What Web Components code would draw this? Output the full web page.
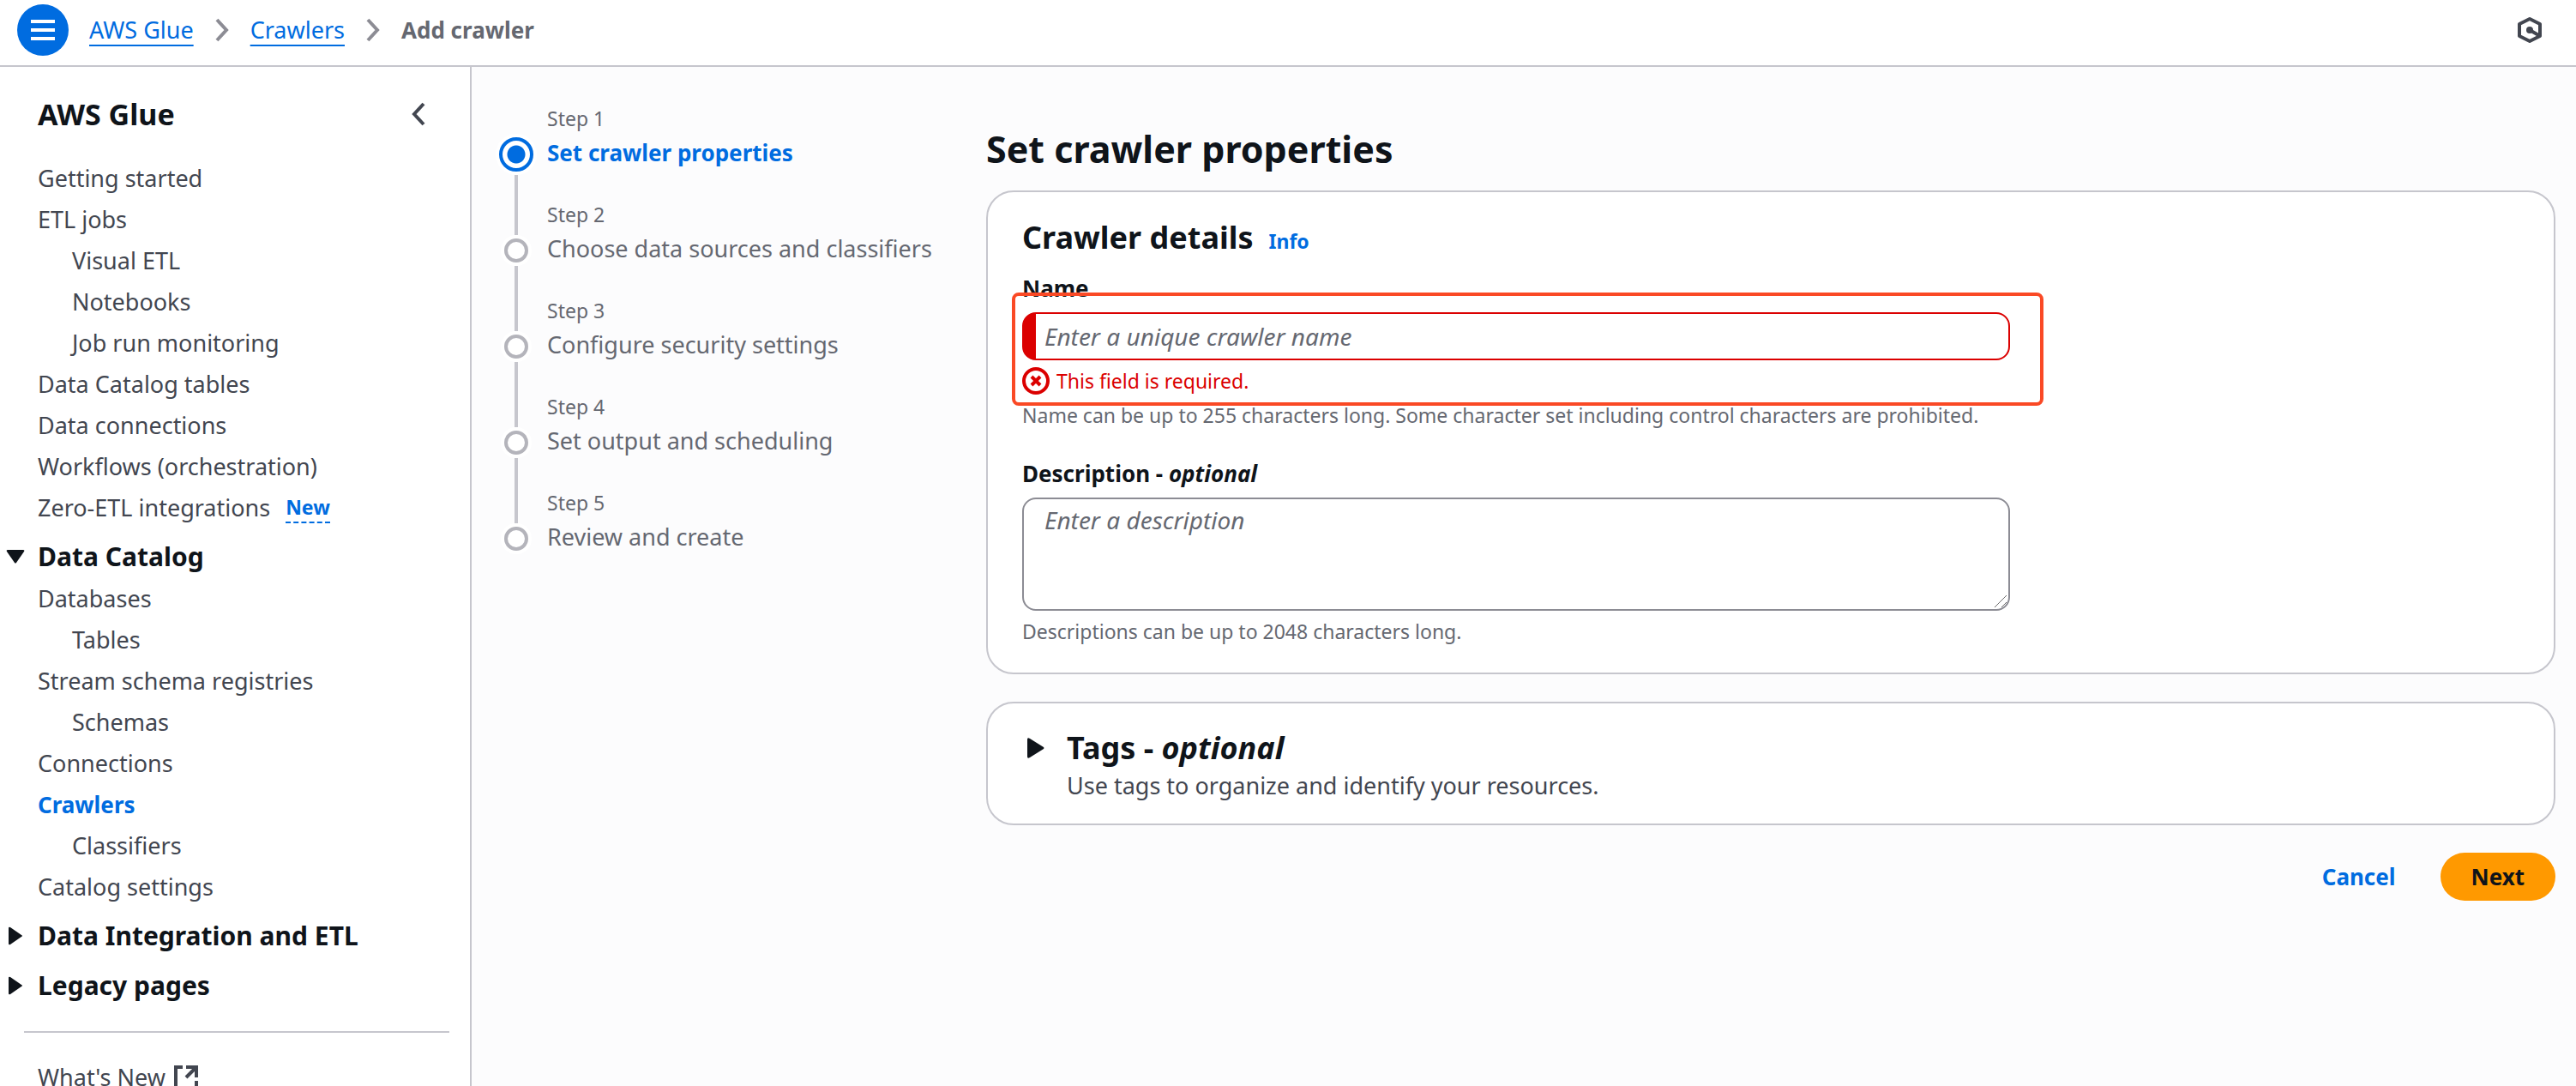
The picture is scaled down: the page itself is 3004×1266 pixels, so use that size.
<!DOCTYPE html>
<html lang="en">
<head>
<meta charset="utf-8">
<meta name="viewport" content="width=device-width, initial-scale=1">
<title>Add crawler - AWS Glue</title>
<style>
    :root {
        --heading: #0f141a;
        --body: #424650;
        --muted: #656871;
        --line: #c6c6cd;
        --field-line: #8c8c94;
        --blue: #006ce0;
        --red: #db0000;
        --orange: #ff9900;
        --text-s: 23px;
        --text-m: 27px;
        --text-m-bold: 26px;
        --text-xl: 36px;
    }

    body {
        margin: 0;
        height: 100vh;
        overflow: hidden;
        font-family: "Noto Sans", "Open Sans", sans-serif;
        font-size: var(--text-m);
        line-height: 40px;
        color: var(--heading);
        background: #fcfcfd;
    }
</style>
</head>
<body>
<app-shell>
    <top-bar slot="header"></top-bar>
    <side-nav slot="nav" heading="AWS Glue"></side-nav>
    <step-list slot="steps" current="1"></step-list>

    <page-content heading="Set crawler properties">
        <panel-box>
            <panel-title>Crawler details</panel-title>
            <form-field placeholder="Enter a unique crawler name" error="This field is required."
                hint="Name can be up to 255 characters long. Some character set including control characters are prohibited.">Name</form-field>
            <form-field multiline placeholder="Enter a description"
                hint="Descriptions can be up to 2048 characters long.">Description - <i>optional</i></form-field>
        </panel-box>
        <panel-box>
            <expand-section>
                Tags - <i>optional</i>
                <span slot="description">Use tags to organize and identify your resources.</span>
            </expand-section>
        </panel-box>
        <wizard-actions></wizard-actions>
    </page-content>
</app-shell>

<script>
const ARROW_RIGHT = '<path d="M8 7v18q0 2 2 1l13-9q2-1 0-2L10 6q-2-1-2 1z"/>';
const ARROW_DOWN = '<path d="M7 8h18q2 0 1 2l-9 13q-1 1-2 0L6 10q-1-2 1-2z"/>';

class AppShell extends HTMLElement {
    connectedCallback() {
        this.attachShadow({ mode: 'open' });
        this.shadowRoot.innerHTML = `
            <style>
                :host {
                    display: flex;
                    flex-direction: column;
                    height: 100%;
                }

                .columns {
                    display: grid;
                    grid-template-columns: 550px 1fr;
                    flex: 1;
                    min-height: 0;
                }

                main {
                    display: grid;
                    grid-template-columns: 568px 1fr;
                    align-items: start;
                    padding: 42px 24px 0 32px;
                    overflow: hidden;
                }
            </style>
            <slot name="header"></slot>
            <div class="columns">
                <slot name="nav"></slot>
                <main>
                    <slot name="steps"></slot>
                    <slot></slot>
                </main>
            </div>
        `;
    }
}

class TopBar extends HTMLElement {
    connectedCallback() {
        this.attachShadow({ mode: 'open' });
        const chevron = `
            <svg class="chevron" width="16" height="28" viewBox="0 0 16 28" aria-hidden="true">
                <path d="M2 2l11 12L2 26" fill="none" stroke="currentColor" stroke-width="4"/>
            </svg>`;
        this.shadowRoot.innerHTML = `
            <style>
                :host {
                    display: block;
                    background: #fff;
                    border-bottom: 2px solid var(--line);
                }

                header {
                    display: flex;
                    align-items: center;
                    gap: 24px;
                    padding: 5px 38px 11px 20px;
                }

                button {
                    display: flex;
                    align-items: center;
                    justify-content: center;
                    padding: 0;
                    border: 0;
                    background: none;
                    color: var(--body);
                    cursor: pointer;
                }

                .menu {
                    width: 60px;
                    height: 60px;
                    border-radius: 50%;
                    background: var(--blue);
                    color: #fff;
                }

                nav {
                    flex: 1;
                }

                ol {
                    display: flex;
                    align-items: center;
                    gap: 25px;
                    margin: 0;
                    padding: 0;
                    list-style: none;
                }

                li {
                    display: flex;
                    align-items: center;
                    gap: 25px;
                }

                a {
                    color: var(--blue);
                    text-decoration: underline;
                    text-decoration-thickness: 2px;
                    text-decoration-skip-ink: none;
                    text-underline-offset: 7px;
                }

                b {
                    font-size: var(--text-m-bold);
                    color: var(--muted);
                }

                .chevron {
                    color: var(--field-line);
                }
            </style>
            <header>
                <button class="menu" aria-label="Open navigation">
                    <svg width="28" height="24" viewBox="0 0 28 24">
                        <path d="M0 2h28M0 12h28M0 22h28" stroke="currentColor" stroke-width="4"/>
                    </svg>
                </button>
                <nav aria-label="Breadcrumbs">
                    <ol>
                        <li><a href="#glue">AWS Glue</a>${chevron}</li>
                        <li><a href="#crawlers">Crawlers</a>${chevron}</li>
                        <li><b>Add crawler</b></li>
                    </ol>
                </nav>
                <button aria-label="Open tools">
                    <svg width="32" height="32" viewBox="0 0 32 32">
                        <path d="M16 3l12 6v14l-12 6-12-6V9z" fill="none" stroke="currentColor" stroke-width="4" stroke-linejoin="round"/>
                        <path d="M16 16l12 7" stroke="currentColor" stroke-width="4"/>
                        <circle cx="16" cy="16" r="4" fill="currentColor"/>
                    </svg>
                </button>
            </header>
        `;
    }
}

class SideNav extends HTMLElement {
    static items = [
        { text: 'Getting started' },
        { text: 'ETL jobs' },
        { text: 'Visual ETL', child: true },
        { text: 'Notebooks', child: true },
        { text: 'Job run monitoring', child: true },
        { text: 'Data Catalog tables' },
        { text: 'Data connections' },
        { text: 'Workflows (orchestration)' },
        { text: 'Zero-ETL integrations', badge: 'New' },
        { text: 'Data Catalog', section: true, open: true },
        { text: 'Databases' },
        { text: 'Tables', child: true },
        { text: 'Stream schema registries' },
        { text: 'Schemas', child: true },
        { text: 'Connections' },
        { text: 'Crawlers', active: true },
        { text: 'Classifiers', child: true },
        { text: 'Catalog settings' },
        { text: 'Data Integration and ETL', section: true },
        { text: 'Legacy pages', section: true },
        { divider: true },
        { text: "What's New", external: true },
    ];

    renderItem(item) {
        if (item.divider) return '<li><hr></li>';
        if (item.section) {
            return `
                <li>
                    <button class="section" aria-expanded="${!!item.open}">
                        <svg width="32" height="32" viewBox="0 0 32 32" fill="currentColor">${item.open ? ARROW_DOWN : ARROW_RIGHT}</svg>
                        ${item.text}
                    </button>
                </li>`;
        }
        const cls = [item.child ? 'child' : '', item.active ? 'active' : ''].join(' ').trim();
        return `
            <li class="${cls}">
                <a href="#" ${item.active ? 'aria-current="page"' : ''}>${item.text}</a>
                ${item.badge ? `<button class="badge">${item.badge}</button>` : ''}
                ${item.external ? `
                    <svg width="32" height="32" viewBox="0 0 16 16" fill="none" stroke="currentColor" stroke-width="2" aria-label="Opens in a new tab">
                        <path d="M6 2H2v12h12v-4M8 2h6v6M14 2L8 8"/>
                    </svg>` : ''}
            </li>`;
    }

    connectedCallback() {
        this.attachShadow({ mode: 'open' });
        this.shadowRoot.innerHTML = `
            <style>
                :host {
                    display: block;
                    min-height: 0;
                    overflow: hidden;
                    background: #fff;
                    border-right: 2px solid var(--line);
                }

                .head {
                    display: flex;
                    align-items: center;
                    justify-content: space-between;
                    padding: 32px 52px 28px 44px;
                }

                h2 {
                    margin: 0;
                    font-size: 34px;
                    line-height: 46px;
                }

                button {
                    padding: 0;
                    border: 0;
                    background: none;
                    font: inherit;
                    color: inherit;
                    cursor: pointer;
                }

                .collapse {
                    display: flex;
                    color: var(--body);
                }

                ul {
                    margin: 0;
                    padding: 0;
                    list-style: none;
                    color: var(--body);
                    line-height: 48px;
                }

                li:has(a) {
                    display: flex;
                    align-items: center;
                    padding-left: 44px;
                    height: 48px;
                }

                li.child {
                    padding-left: 84px;
                }

                a {
                    color: inherit;
                    text-decoration: none;
                }

                a + svg {
                    margin-left: 8px;
                }

                .active {
                    color: var(--blue);
                    font-size: var(--text-m-bold);
                    font-weight: 700;
                }

                .badge {
                    margin-left: 18px;
                    border-bottom: 2px dashed var(--blue);
                    color: var(--blue);
                    font-size: var(--text-s);
                    font-weight: 700;
                    line-height: 34px;
                }

                .section {
                    display: flex;
                    align-items: center;
                    gap: 10px;
                    padding: 12px 0 4px 2px;
                    color: var(--heading);
                    font-size: 30px;
                    font-weight: 700;
                    line-height: 42px;
                }

                hr {
                    margin: 28px 24px 28px 28px;
                    border: 0;
                    border-top: 2px solid var(--line);
                }
            </style>
            <div class="head">
                <h2>${this.getAttribute('heading')}</h2>
                <button class="collapse" aria-label="Close navigation">
                    <svg width="16" height="28" viewBox="0 0 16 28">
                        <path d="M14 2L3 14l11 12" fill="none" stroke="currentColor" stroke-width="4"/>
                    </svg>
                </button>
            </div>
            <ul>${SideNav.items.map((item) => this.renderItem(item)).join('')}</ul>
        `;
    }
}

class StepList extends HTMLElement {
    connectedCallback() {
        this.attachShadow({ mode: 'open' });
        const current = Number(this.getAttribute('current'));
        const steps = [
            'Set crawler properties',
            'Choose data sources and classifiers',
            'Configure security settings',
            'Set output and scheduling',
            'Review and create',
        ];
        this.shadowRoot.innerHTML = `
            <style>
                :host {
                    display: block;
                    color: var(--muted);
                }

                ol {
                    margin: 0;
                    padding: 0;
                    list-style: none;
                }

                li {
                    display: grid;
                    grid-template-columns: 40px 1fr;
                    column-gap: 16px;
                    height: 112px;
                }

                .track {
                    display: flex;
                    flex-direction: column;
                    align-items: center;
                    gap: 4px;
                }

                .track::before,
                .track::after {
                    content: "";
                    width: 4px;
                    height: 42px;
                    background: var(--line);
                }

                .track::after {
                    height: auto;
                    flex: 1;
                }

                li:first-child .track::before,
                li:last-child .track::after {
                    background: none;
                }

                .ring {
                    box-sizing: border-box;
                    width: 28px;
                    height: 28px;
                    border: 4px solid #b4b4bb;
                    border-radius: 50%;
                    background: #fff;
                    box-shadow: 0 0 0 4px #fff;
                }

                .current .track::before {
                    height: 36px;
                }

                .current .ring {
                    width: 40px;
                    height: 40px;
                    border-color: var(--blue);
                    background: radial-gradient(circle, var(--blue) 10px, #fff 11px);
                }

                .number {
                    font-size: var(--text-s);
                    line-height: 36px;
                }

                a {
                    display: block;
                    color: inherit;
                    line-height: 44px;
                    text-decoration: none;
                }

                .current a {
                    color: var(--blue);
                    font-size: var(--text-m-bold);
                    font-weight: 700;
                }
            </style>
            <ol>
                ${steps.map((step, i) => `
                    <li class="${i + 1 === current ? 'current' : ''}">
                        <div class="track"><div class="ring"></div></div>
                        <div>
                            <div class="number">Step ${i + 1}</div>
                            <a href="#step-${i + 1}">${step}</a>
                        </div>
                    </li>`).join('')}
            </ol>
        `;
    }
}

class PageContent extends HTMLElement {
    connectedCallback() {
        this.attachShadow({ mode: 'open' });
        this.shadowRoot.innerHTML = `
            <style>
                :host {
                    display: flex;
                    flex-direction: column;
                    gap: 32px;
                    padding-top: 24px;
                }

                h1 {
                    margin: 0 0 -14px;
                    font-size: 43px;
                    line-height: 60px;
                }
            </style>
            <h1>${this.getAttribute('heading')}</h1>
            <slot></slot>
        `;
    }
}

class PanelBox extends HTMLElement {
    connectedCallback() {
        this.attachShadow({ mode: 'open' });
        this.shadowRoot.innerHTML = `
            <style>
                :host {
                    display: flex;
                    flex-direction: column;
                    gap: 32px;
                    padding: 24px 40px 32px;
                    border: 2px solid var(--line);
                    border-radius: 32px;
                    background: #fff;
                }
            </style>
            <slot></slot>
        `;
    }
}

class PanelTitle extends HTMLElement {
    connectedCallback() {
        this.attachShadow({ mode: 'open' });
        this.shadowRoot.innerHTML = `
            <style>
                :host {
                    display: flex;
                    align-items: baseline;
                    gap: 18px;
                    margin-bottom: -22px;
                    line-height: 58px;
                }

                h2 {
                    margin: 0;
                    font-size: var(--text-xl);
                }

                a {
                    color: var(--blue);
                    font-size: var(--text-s);
                    font-weight: 700;
                    line-height: 32px;
                    text-decoration: none;
                }
            </style>
            <h2><slot></slot></h2>
            <a href="#info">Info</a>
        `;
    }
}

class FormField extends HTMLElement {
    connectedCallback() {
        this.attachShadow({ mode: 'open' });
        const placeholder = this.getAttribute('placeholder');
        const error = this.getAttribute('error');
        const control = this.hasAttribute('multiline')
            ? `<textarea id="control" rows="3" placeholder="${placeholder}" aria-describedby="hint"></textarea>
               <svg class="grip" width="16" height="16" viewBox="0 0 16 16" stroke="#6b6b6b" aria-hidden="true">
                   <path d="M1 15L15 1M9 15l6-6"/>
               </svg>`
            : `<input id="control" type="text" placeholder="${placeholder}" aria-describedby="hint" ${error ? 'aria-invalid="true"' : ''}>`;
        this.shadowRoot.innerHTML = `
            <style>
                :host {
                    display: flex;
                    flex-direction: column;
                    align-items: flex-start;
                    gap: 8px;
                }

                label {
                    font-size: var(--text-m-bold);
                    font-weight: 700;
                    line-height: 40px;
                }

                .control {
                    position: relative;
                    width: 66%;
                }

                input,
                textarea {
                    display: block;
                    box-sizing: border-box;
                    width: 100%;
                    margin: 0;
                    padding: 4px 24px;
                    border: 2px solid var(--field-line);
                    border-radius: 16px;
                    background: #fff;
                    color: var(--heading);
                    font: inherit;
                    font-size: 28px;
                    line-height: 40px;
                    resize: vertical;
                }

                input {
                    height: 56px;
                }

                input[aria-invalid] {
                    padding-left: 10px;
                    border-color: var(--red);
                    border-left-width: 16px;
                }

                ::placeholder {
                    color: var(--muted);
                    font-style: italic;
                    opacity: 1;
                }

                ::-webkit-resizer {
                    background: none;
                }

                .grip {
                    position: absolute;
                    right: 3px;
                    bottom: 3px;
                    pointer-events: none;
                }

                .error {
                    display: flex;
                    align-items: center;
                    gap: 8px;
                    margin-top: 8px;
                    color: var(--red);
                    font-size: var(--text-s);
                    line-height: 32px;
                }

                /* callout drawn over the invalid control and its message */
                .callout {
                    position: absolute;
                    inset: -23px -39px -13px -12px;
                    border: 4px solid #fa4925;
                    border-radius: 8px;
                    pointer-events: none;
                }

                #hint {
                    color: var(--muted);
                    font-size: var(--text-s);
                    line-height: 32px;
                }
            </style>
            <label for="control"><slot></slot></label>
            <div class="control">
                ${control}
                ${error ? `
                    <div class="error" role="alert">
                        <svg width="32" height="32" viewBox="0 0 32 32" fill="none" stroke="currentColor">
                            <circle cx="16" cy="16" r="14" stroke-width="4"/>
                            <path d="M11 11l10 10M21 11L11 21" stroke-width="4"/>
                        </svg>
                        ${error}
                    </div>
                    <div class="callout"></div>` : ''}
            </div>
            <div id="hint">${this.getAttribute('hint')}</div>
        `;
    }
}

class ExpandSection extends HTMLElement {
    connectedCallback() {
        this.attachShadow({ mode: 'open' });
        this.shadowRoot.innerHTML = `
            <style>
                :host {
                    display: block;
                    margin-bottom: -4px;
                }

                button {
                    display: grid;
                    grid-template-columns: 32px auto;
                    align-items: center;
                    column-gap: 20px;
                    padding: 0;
                    border: 0;
                    background: none;
                    font: inherit;
                    color: inherit;
                    text-align: left;
                    cursor: pointer;
                }

                .title {
                    font-size: var(--text-xl);
                    font-weight: 700;
                    line-height: 56px;
                }

                .description {
                    grid-column: 2;
                    color: var(--body);
                    line-height: 32px;
                }
            </style>
            <button aria-expanded="false">
                <svg width="32" height="32" viewBox="0 0 32 32" fill="currentColor">
                    <path d="M6 6v20q0 3 3 1l16-10q1-1 0-2L9 5Q6 3 6 6z"/>
                </svg>
                <span class="title"><slot></slot></span>
                <span class="description"><slot name="description"></slot></span>
            </button>
        `;
    }
}

class WizardActions extends HTMLElement {
    connectedCallback() {
        this.attachShadow({ mode: 'open' });
        this.shadowRoot.innerHTML = `
            <style>
                :host {
                    display: flex;
                    justify-content: flex-end;
                    gap: 12px;
                }

                button {
                    padding: 8px 40px;
                    border: 0;
                    border-radius: 28px;
                    background: none;
                    color: var(--blue);
                    font: inherit;
                    font-size: var(--text-m-bold);
                    font-weight: 700;
                    cursor: pointer;
                }

                .primary {
                    padding: 8px 36px;
                    background: var(--orange);
                    color: var(--heading);
                }
            </style>
            <button>Cancel</button>
            <button class="primary">Next</button>
        `;
    }
}

customElements.define('app-shell', AppShell);
customElements.define('top-bar', TopBar);
customElements.define('side-nav', SideNav);
customElements.define('step-list', StepList);
customElements.define('page-content', PageContent);
customElements.define('panel-box', PanelBox);
customElements.define('panel-title', PanelTitle);
customElements.define('form-field', FormField);
customElements.define('expand-section', ExpandSection);
customElements.define('wizard-actions', WizardActions);
</script>
</body>
</html>
